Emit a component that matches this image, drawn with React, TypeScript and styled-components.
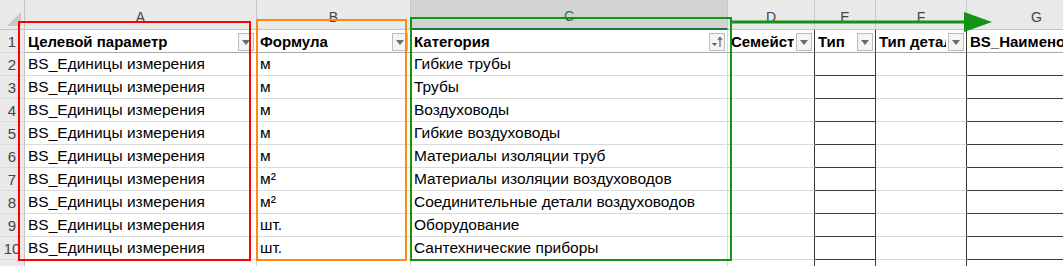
import styled, { createGlobalStyle } from "styled-components";

const GlobalStyle = createGlobalStyle`
  html, body {
    margin: 0;
    padding: 0;
    background: #ffffff;
  }
  body {
    font-family: "Liberation Sans", "DejaVu Sans", sans-serif;
    overflow: hidden;
  }
`;

const DARK = "#3a3a3a";
const GRID = "#dadada";

const Sheet = styled.div`
  position: relative;
  width: 1063px;
  height: 266px;
  overflow: hidden;
  display: grid;
  grid-template-columns: 25px 232px 154px 317px 87px 61px 91px 140px;
  grid-template-rows: 30px repeat(11, 23px);
`;

const Corner = styled.div`
  background: #e9e9e9;
  border-right: 1px solid #c4c4c4;
  border-bottom: 1px solid #c4c4c4;
  position: relative;
  &::after {
    content: "";
    position: absolute;
    right: 3px;
    bottom: 3px;
    border-left: 14px solid transparent;
    border-bottom: 14px solid #c8c8c8;
  }
`;

const ColHead = styled.div<{ $active?: boolean }>`
  background: ${(p) => (p.$active ? "#d3d3d3" : "#e9e9e9")};
  color: ${(p) => (p.$active ? "#217346" : "#444")};
  border-right: 1px solid #c8c8c8;
  border-bottom: ${(p) => (p.$active ? "2px solid #217346" : "1px solid #c4c4c4")};
  display: flex;
  align-items: center;
  justify-content: center;
  padding-top: 4px;
  font-size: 14px;
`;

const RowNum = styled.div`
  background: #e9e9e9;
  color: #444;
  border-right: 1px solid #c4c4c4;
  border-bottom: 1px solid ${GRID};
  display: flex;
  align-items: center;
  justify-content: center;
  font-size: 15px;
`;

const Cell = styled.div<{ $head?: boolean; $rightDark?: boolean; $bottomDark?: boolean }>`
  border-right: 1px solid ${(p) => (p.$rightDark ? DARK : GRID)};
  border-bottom: 1px solid
    ${(p) => (p.$bottomDark ? DARK : p.$head ? "#a9a9a9" : GRID)};
  display: flex;
  align-items: center;
  gap: 2px;
  padding: 0 2px 0 3px;
  font-size: ${(p) => (p.$head ? "15px" : "15.5px")};
  font-weight: ${(p) => (p.$head ? 700 : 400)};
  color: #000;
  white-space: nowrap;
  overflow: hidden;
  min-width: 0;
`;

const CellText = styled.span`
  flex: 1;
  overflow: hidden;
  min-width: 0;
`;

const FilterBtn = styled.div`
  flex: none;
  width: 14px;
  height: 16px;
  margin-top: 2px;
  border: 1px solid #bcbcbc;
  background: #f4f4f4;
  display: flex;
  align-items: center;
  justify-content: center;
`;

const Frame = styled.div<{ $color: string }>`
  position: absolute;
  border: 2px solid ${(p) => p.$color};
  pointer-events: none;
`;

const Arrow = styled.svg`
  position: absolute;
  left: 728px;
  top: 8px;
`;

const letters = ["A", "B", "C", "D", "E", "F", "G"];

const headers = [
  "Целевой параметр",
  "Формула",
  "Категория",
  "Семейство",
  "Тип",
  "Тип детали",
  "BS_Наименование",
];

const rows: [string, string, string][] = [
  ["BS_Единицы измерения", "м", "Гибкие трубы"],
  ["BS_Единицы измерения", "м", "Трубы"],
  ["BS_Единицы измерения", "м", "Воздуховоды"],
  ["BS_Единицы измерения", "м", "Гибкие воздуховоды"],
  ["BS_Единицы измерения", "м", "Материалы изоляции труб"],
  ["BS_Единицы измерения", "м²", "Материалы изоляции воздуховодов"],
  ["BS_Единицы измерения", "м²", "Соединительные детали воздуховодов"],
  ["BS_Единицы измерения", "шт.", "Оборудование"],
  ["BS_Единицы измерения", "шт.", "Сантехнические приборы"],
];

// columns D, E, F have dark right edges (boxes around E and G)
const rightDark = [false, false, false, true, true, true, false];
const bottomDark = [false, false, false, false, true, false, true];

const DropIcon = () => (
  <svg width="8" height="5" viewBox="0 0 8 5">
    <path d="M0 0 H8 L4 5 Z" fill="#6b6b6b" />
  </svg>
);

const SortIcon = () => (
  <svg width="12" height="12" viewBox="0 0 12 12">
    <path d="M1 7 H6 L3.5 10 Z" fill="#555" />
    <path d="M9 11 V2 M7 4 L9 1.5 L11 4" stroke="#555" strokeWidth="1.1" fill="none" />
  </svg>
);

const App = () => {
  return (
    <>
      <GlobalStyle />
      <Sheet>
        <Corner />
        {letters.map((l) => (
          <ColHead key={l} $active={l === "C"}>
            {l}
          </ColHead>
        ))}

        <RowNum>1</RowNum>
        {headers.map((h, i) => (
          <Cell key={h} $head $rightDark={rightDark[i]}>
            <CellText>{h}</CellText>
            {i < 6 && <FilterBtn>{i === 2 ? <SortIcon /> : <DropIcon />}</FilterBtn>}
          </Cell>
        ))}

        {rows.map((r, ri) => (
          <>
            <RowNum key={"n" + ri}>{ri + 2}</RowNum>
            {letters.map((l, ci) => (
              <Cell
                key={l + ri}
                $rightDark={rightDark[ci]}
                $bottomDark={bottomDark[ci]}
              >
                <CellText>{ci < 3 ? r[ci] : ""}</CellText>
              </Cell>
            ))}
          </>
        ))}

        <RowNum>11</RowNum>
        {letters.map((l, ci) => (
          <Cell key={"last" + l} $rightDark={rightDark[ci]} />
        ))}

        <Frame $color="#ff0000" style={{ left: 18, top: 21, width: 229, height: 236 }} />
        <Frame $color="#ff8a12" style={{ left: 256, top: 19, width: 147, height: 238 }} />
        <Frame $color="#149414" style={{ left: 410, top: 17, width: 318, height: 240 }} />
        <Arrow width="270" height="30" viewBox="0 0 270 30">
          <path d="M2 14 H240" stroke="#149414" strokeWidth="3" />
          <path d="M236 4 L264 14 L236 24 Z" fill="#149414" />
        </Arrow>
      </Sheet>
    </>
  );
};

export default App;
